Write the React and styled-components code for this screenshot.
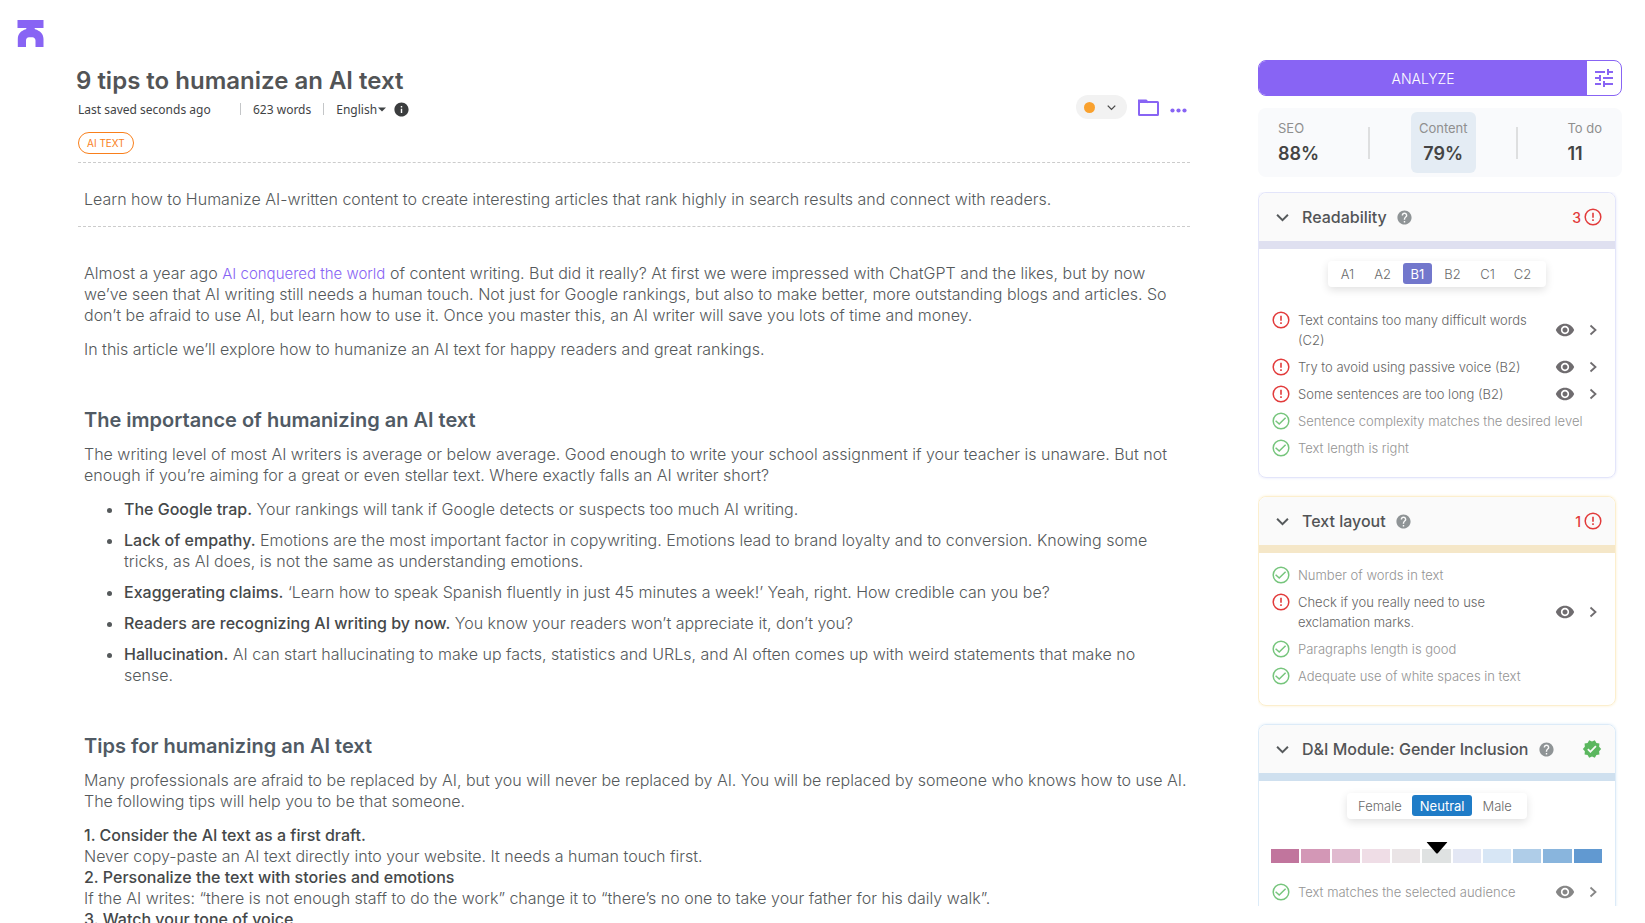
import React, { useState } from 'react'
import styled, { createGlobalStyle } from 'styled-components'
import { MdHelp, MdInfo, MdVisibility, MdTune, MdVerified } from 'react-icons/md'

const levels = ['A1', 'A2', 'B1', 'B2', 'C1', 'C2']
const genders = ['Female', 'Neutral', 'Male']

const scaleColors = [
  '#c1759d',
  '#d397b6',
  '#e0bacf',
  '#efdde6',
  '#eae4e6',
  '#dfe2e2',
  '#e3e7f4',
  '#d7e6f5',
  '#afcde8',
  '#89b5dd',
  '#6199d1',
]

const readabilityList = [
  { text: 'Text contains too many difficult words (C2)', error: true, action: true },
  { text: 'Try to avoid using passive voice (B2)', error: true, action: true },
  { text: 'Some sentences are too long (B2)', error: true, action: true },
  { text: 'Sentence complexity matches the desired level' },
  { text: 'Text length is right' },
]

const layoutList = [
  { text: 'Number of words in text' },
  { text: 'Check if you really need to use exclamation marks.', error: true, action: true },
  { text: 'Paragraphs length is good' },
  { text: 'Adequate use of white spaces in text' },
]

const genderList = [{ text: 'Text matches the selected audience', action: true }]

const ErrorIcon = () => (
  <svg width="18" height="18" viewBox="0 0 18 18" fill="none" stroke="#e23b3b" strokeWidth="1.5">
    <circle cx="9" cy="9" r="7.8" />
    <path d="M9 4.800v5M9 11.200v1.700" strokeWidth="1.6" />
  </svg>
)

const CheckIcon = () => (
  <svg width="18" height="18" viewBox="0 0 18 18" fill="none" stroke="#76c57c" strokeWidth="1.5">
    <circle cx="9" cy="9" r="7.8" />
    <path d="M3.600 8.800l3.600 3.200 6.400-6.200" />
  </svg>
)

const ChevronIcon = ({ size = 12, right }) => (
  <svg width={size} height={size} viewBox="0 0 12 12" fill="none" stroke="currentColor" strokeWidth="1.8">
    <path d={right ? 'M3.5 1.5L8.5 6l-5 4.5' : 'M1 3.5l5 5 5-5'} />
  </svg>
)

const FolderIcon = () => (
  <svg width="21" height="17" viewBox="0 0 21 17" fill="none" stroke="#8864f4" strokeWidth="2">
    <rect x="1" y="3" width="19" height="13" rx="0.5" />
    <path d="M1 4V1.500H8L10 3.500" />
  </svg>
)

const DotsIcon = () => (
  <svg width="17" height="11" viewBox="0 0 17 11" fill="#8864f4">
    <circle cx="2.500" cy="8.500" r="2.100" />
    <circle cx="8.500" cy="8.500" r="2.100" />
    <circle cx="14.500" cy="8.500" r="2.100" />
  </svg>
)

const Logo = () => (
  <svg width="27" height="27" viewBox="0 0 27 27" fill="#8864f4">
    <path d="M0.500 0H26.500V8H17.500L18 9.200C23 10.500 26.500 14 26.500 19V27H18.500V20.500C18.500 18.500 17 17.200 15.500 17.200H12C10 17.200 9 18.500 9 20.500V27H0.800V19C0.800 14 4 10.500 9 9.200L9.500 8H0.500Z" />
  </svg>
)

const CheckList = ({ list }) => (
  <List>
    {list.map((item) => (
      <CheckItem key={item.text} $error={item.error}>
        {item.error ? <ErrorIcon /> : <CheckIcon />}
        <p>{item.text}</p>
        {item.action && (
          <ItemActions $muted={!item.error}>
            <IconButton aria-label="Show in text">
              <MdVisibility size={20} />
            </IconButton>
            <IconButton aria-label="Details">
              <ChevronIcon right />
            </IconButton>
          </ItemActions>
        )}
      </CheckItem>
    ))}
  </List>
)

const Segment = ({ options, value, onChange, color, wide }) => (
  <SegmentBox>
    {options.map((option) => (
      <SegmentButton
        key={option}
        $active={option === value}
        $color={color}
        $wide={wide}
        onClick={() => onChange(option)}
      >
        {option}
      </SegmentButton>
    ))}
  </SegmentBox>
)

const Module = ({ title, count, color, border, children }) => {
  const [open, setOpen] = useState(true)

  return (
    <Card $border={border}>
      <CardHeader $color={color}>
        <IconButton aria-label={title} aria-expanded={open} onClick={() => setOpen(!open)}>
          <ChevronIcon size={13} />
        </IconButton>
        <h3>{title}</h3>
        <MdHelp size={17} color="#8f9496" />
        <CardStatus>
          {count ? (
            <>
              {count}
              <ErrorIcon />
            </>
          ) : (
            <MdVerified size={20} color="#5bb75f" />
          )}
        </CardStatus>
      </CardHeader>
      {open && children}
    </Card>
  )
}

const App = () => {
  const [level, setLevel] = useState('B1')
  const [gender, setGender] = useState('Neutral')

  return (
    <>
      <GlobalStyle />
      <Page>
        <LogoLink href="#" aria-label="Home">
          <Logo />
        </LogoLink>

        <Editor>
          <Title>9 tips to humanize an AI text</Title>
          <MetaRow>
            <SavedText>Last saved seconds ago</SavedText>
            <MetaItem>623 words</MetaItem>
            <MetaItem>
              <Language>
                <select aria-label="Language" defaultValue="English">
                  <option>English</option>
                  <option>Dutch</option>
                </select>
                <svg width="8" height="5" viewBox="0 0 8 5" fill="currentColor">
                  <path d="M0 0.500h8L4 4.500z" />
                </svg>
              </Language>
              <MdInfo size={17} color="#3b3d3e" />
            </MetaItem>
            <Tools>
              <StatusButton aria-label="Status">
                <span />
                <ChevronIcon size={9} />
              </StatusButton>
              <IconButton aria-label="Folder">
                <FolderIcon />
              </IconButton>
              <IconButton aria-label="More">
                <DotsIcon />
              </IconButton>
            </Tools>
          </MetaRow>
          <Tag>AI TEXT</Tag>
          <Description>
            Learn how to Humanize AI-written content to create interesting articles that rank highly in search results
            and connect with readers.
          </Description>

          <Article>
            <p>
              Almost a year ago <a href="#">AI conquered the world</a> of content writing. But did it really? At first
              we were impressed with ChatGPT and the likes, but by now we’ve seen that AI writing still needs a human
              touch. Not just for Google rankings, but also to make better, more outstanding blogs and articles. So
              don’t be afraid to use AI, but learn how to use it. Once you master this, an AI writer will save you lots
              of time and money.
            </p>
            <p>In this article we’ll explore how to humanize an AI text for happy readers and great rankings.</p>
            <h2>The importance of humanizing an AI text</h2>
            <p>
              The writing level of most AI writers is average or below average. Good enough to write your school
              assignment if your teacher is unaware. But not enough if you’re aiming for a great or even stellar text.
              Where exactly falls an AI writer short?
            </p>
            <ul>
              <li>
                <strong>The Google trap.</strong> Your rankings will tank if Google detects or suspects too much AI
                writing.
              </li>
              <li>
                <strong>Lack of empathy.</strong> Emotions are the most important factor in copywriting. Emotions lead
                to brand loyalty and to conversion. Knowing some tricks, as AI does, is not the same as understanding
                emotions.
              </li>
              <li>
                <strong>Exaggerating claims.</strong> ‘Learn how to speak Spanish fluently in just 45 minutes a week!’
                Yeah, right. How credible can you be?
              </li>
              <li>
                <strong>Readers are recognizing AI writing by now.</strong> You know your readers won’t appreciate it,
                don’t you?
              </li>
              <li>
                <strong>Hallucination.</strong> AI can start hallucinating to make up facts, statistics and URLs, and AI
                often comes up with weird statements that make no sense.
              </li>
            </ul>
            <h2>Tips for humanizing an AI text</h2>
            <p>
              Many professionals are afraid to be replaced by AI, but you will never be replaced by AI. You will be
              replaced by someone who knows how to use AI. The following tips will help you to be that someone.
            </p>
            <p>
              <strong>1. Consider the AI text as a first draft.</strong>
              <br />
              Never copy-paste an AI text directly into your website. It needs a human touch first.
              <br />
              <strong>2. Personalize the text with stories and emotions</strong>
              <br />
              If the AI writes: “there is not enough staff to do the work” change it to “there’s no one to take your
              father for his daily walk”.
              <br />
              <strong>3. Watch your tone of voice</strong>
            </p>
          </Article>
        </Editor>

        <Sidebar>
          <AnalyzeBar>
            <AnalyzeButton>ANALYZE</AnalyzeButton>
            <SettingsButton aria-label="Settings">
              <MdTune size={24} />
            </SettingsButton>
          </AnalyzeBar>
          <Scores>
            <Score>
              SEO
              <strong>88%</strong>
            </Score>
            <Divider />
            <Score $active>
              Content
              <strong>79%</strong>
            </Score>
            <Divider />
            <Score>
              To do
              <strong>11</strong>
            </Score>
          </Scores>

          <Modules>
            <Module title="Readability" count={3} color="#dfe0f0" border="#e3e5fa">
              <Segment options={levels} value={level} onChange={setLevel} color="#7277cc" />
              <CheckList list={readabilityList} />
            </Module>
            <Module title="Text layout" count={1} color="#f5e7c8" border="#fcefce">
              <CheckList list={layoutList} />
            </Module>
            <Module title="D&I Module: Gender Inclusion" color="#cfe0ef" border="#dcebf8">
              <Segment options={genders} value={gender} onChange={setGender} color="#1f7cc7" wide />
              <Scale>
                {scaleColors.map((color) => (
                  <ScaleCell key={color} $color={color} />
                ))}
                <Pointer width="21" height="12" viewBox="0 0 21 12">
                  <path d="M0 0h21L11.500 11q-1 1-2 0z" />
                </Pointer>
              </Scale>
              <CheckList list={genderList} />
            </Module>
          </Modules>
        </Sidebar>
      </Page>
    </>
  )
}

const GlobalStyle = createGlobalStyle`
  * {
    box-sizing: border-box;
  }
  body {
    margin: 0;
    background-color: #fff;
    font-family: Inter, 'Liberation Sans', sans-serif;
    color: #55595b;
  }
  h1, h2, h3, p, ul {
    margin: 0;
    padding: 0;
  }
  button, select {
    padding: 0;
    border: none;
    background: none;
    font: inherit;
    color: inherit;
    cursor: pointer;
  }
  svg {
    display: block;
    flex-shrink: 0;
  }
`

const Page = styled.div`
  display: flex;
  height: 100vh;
  overflow: hidden;
`

const LogoLink = styled.a`
  flex: 0 0 78px;
  padding: 20px 0 0 17px;
`

const Editor = styled.main`
  flex: 1;
  min-width: 0;
  padding-top: 65px;
`

const Title = styled.h1`
  margin-left: -2px;
  font-size: 24px;
  line-height: 32px;
  font-weight: 600;
  color: #525456;
`

const MetaRow = styled.div`
  display: flex;
  align-items: center;
  height: 24px;
  font-family: 'Noto Sans', sans-serif;
  font-size: 12px;
  color: #3f4345;
`

const SavedText = styled.span`
  width: 162px;
`

const MetaItem = styled.div`
  display: flex;
  align-items: center;
  height: 12px;
  padding: 0 12px;
  border-left: 1px solid #c4c6c8;
`

const Language = styled.div`
  display: flex;
  align-items: center;
  gap: 1px;
  margin-right: 7px;

  select {
    appearance: none;
  }
`

const Tools = styled.div`
  display: flex;
  align-items: center;
  gap: 11px;
  margin: 0 3px 0 auto;
  padding-bottom: 4px;
`

const IconButton = styled.button`
  display: flex;
  align-items: center;
`

const StatusButton = styled.button`
  display: flex;
  align-items: center;
  justify-content: space-between;
  width: 51px;
  height: 24px;
  padding: 0 11px 0 8px;
  border-radius: 12px;
  background-color: #f2f2f2;
  color: #4a4a4a;

  span {
    width: 11px;
    height: 11px;
    border-radius: 50%;
    background-color: #f9a12e;
  }
`

const Tag = styled.div`
  width: fit-content;
  margin-top: 11px;
  padding: 0 8px;
  border: 1px solid #f97f1b;
  border-radius: 11px;
  font-size: 10px;
  line-height: 20px;
  color: #f97f1b;
`

const Description = styled.p`
  margin-top: 8px;
  padding: 26px 6px 16px;
  border-top: 1px dashed #ccc;
  border-bottom: 1px dashed #ccc;
  font-size: 16px;
  line-height: 21px;
  font-weight: 300;
`

const Article = styled.article`
  padding: 36px 0 0 6px;
  font-size: 16px;
  line-height: 21px;
  font-weight: 300;

  p {
    margin-bottom: 13px;
  }
  a {
    font-size: 15px;
    color: #8864f4;
    text-decoration: none;
  }
  strong {
    font-weight: 500;
    color: #454849;
  }
  h2 {
    margin: 47px 0 11px;
    font-size: 20px;
    line-height: 26px;
    font-weight: 600;
    color: #505a64;
  }
  ul {
    padding: 0 8px 0 40px;
  }
  li {
    margin-bottom: 10px;
  }
`

const Sidebar = styled.aside`
  display: flex;
  flex-direction: column;
  flex: 0 0 364px;
  margin: 60px 23px 17px 68px;
`

const AnalyzeBar = styled.div`
  display: flex;
  flex-shrink: 0;
  height: 36px;
  border: 1px solid #8864f4;
  border-radius: 8px;
  overflow: hidden;
`

const AnalyzeButton = styled.button`
  flex: 1;
  background-color: #8864f4;
  color: #fff;
  font-size: 14px;
  font-weight: 300;
`

const SettingsButton = styled.button`
  display: flex;
  align-items: center;
  justify-content: center;
  width: 34px;
  color: #8864f4;
`

const Scores = styled.div`
  display: flex;
  align-items: center;
  justify-content: space-between;
  flex-shrink: 0;
  height: 69px;
  margin-top: 12px;
  padding: 0 12px;
  border-radius: 8px;
  background-color: #f9fafc;
`

const Score = styled.button`
  display: flex;
  flex-direction: column;
  align-items: ${({ $active }) => ($active ? 'center' : 'flex-start')};
  padding: 5px 8px 6px;
  border-radius: 6px;
  background-color: ${({ $active }) => ($active ? '#e4ecf4' : 'transparent')};
  font-size: 13px;
  line-height: 23px;
  color: #8f8f8f;

  strong {
    font-size: 18px;
    line-height: 27px;
    font-weight: 600;
    color: #444;
  }
`

const Divider = styled.span`
  width: 2px;
  height: 32px;
  background-color: #dedfe0;
`

const Modules = styled.div`
  flex: 1;
  min-height: 0;
  margin-top: 15px;
  padding-right: 6px;
  overflow: hidden;
`

const Card = styled.section`
  margin-bottom: 18px;
  padding-bottom: 19px;
  border: 1px solid ${({ $border }) => $border};
  border-radius: 8px;
  box-shadow: 0 0 3px ${({ $border }) => $border};
`

const CardHeader = styled.header`
  display: flex;
  align-items: center;
  height: 56px;
  padding: 0 13px 0 17px;
  border-bottom: 8px solid ${({ $color }) => $color};
  border-radius: 8px 8px 0 0;
  background-color: #fafafa;

  h3 {
    margin: 0 9px 0 13px;
    font-size: 16px;
    font-weight: 500;
    color: #525456;
  }
`

const CardStatus = styled.span`
  display: flex;
  align-items: center;
  gap: 3px;
  margin-left: auto;
  font-size: 14px;
  font-weight: 500;
  color: #e23b3b;
`

const SegmentBox = styled.div`
  display: flex;
  width: fit-content;
  margin: 12px auto 0;
  padding: 2px 6px 3px 2px;
  border-radius: 4px;
  box-shadow: 0 3px 8px rgba(0, 0, 0, 0.12);
`

const SegmentButton = styled.button`
  min-width: 29px;
  height: 21px;
  margin: 0 ${({ $wide }) => ($wide ? '1px' : '3px')};
  padding: 0 ${({ $wide }) => ($wide ? '8px' : '4px')};
  border-radius: 3px;
  background-color: ${({ $active, $color }) => ($active ? $color : 'transparent')};
  font-size: 13px;
  font-weight: ${({ $active }) => ($active ? 400 : 300)};
  color: ${({ $active }) => ($active ? '#fff' : '#6a6a6a')};
`

const List = styled.ul`
  display: flex;
  flex-direction: column;
  gap: 7px;
  padding: 12px 16px 0 13px;
  list-style: none;

  ${SegmentBox} + & {
    padding-top: 23px;
  }
`

const CheckItem = styled.li`
  display: flex;
  color: ${({ $error }) => ($error ? '#666' : '#949494')};

  > svg {
    margin-top: 1px;
  }
  p {
    flex: 1;
    margin-left: 8px;
    font-size: 13px;
    line-height: 20px;
    font-weight: 300;
  }
`

const ItemActions = styled.div`
  display: flex;
  align-items: center;
  gap: 12px;
  margin-left: 16px;
  color: ${({ $muted }) => ($muted ? '#868686' : '#6f6c6f')};
`

const Scale = styled.div`
  position: relative;
  display: flex;
  gap: 2px;
  margin: 30px 13px 7px 12px;
`

const ScaleCell = styled.span`
  flex: 1;
  height: 14px;
  background-color: ${({ $color }) => $color};
`

const Pointer = styled.svg`
  position: absolute;
  top: -7px;
  left: 50%;
  transform: translateX(-50%);
`

export default App
